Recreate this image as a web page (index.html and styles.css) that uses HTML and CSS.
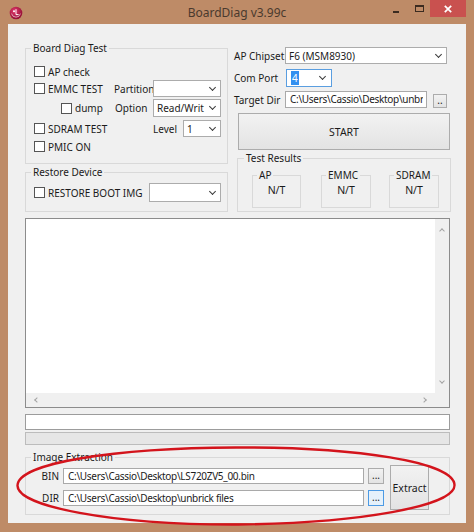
FILE: index.html
```html
<!DOCTYPE html>
<html lang="en">
<head>
<meta charset="utf-8">
<title>BoardDiag v3.99c</title>
<link rel="stylesheet" href="styles.css">
</head>
<body>
<div class="window">
  <div class="titlebar">
    <div class="tb-left">
      <svg class="app-icon" viewBox="0 0 14 14" width="14" height="14">
        <defs>
          <radialGradient id="lg" cx="40%" cy="35%" r="70%">
            <stop offset="0" stop-color="#e23a6e"/>
            <stop offset="1" stop-color="#8e0b30"/>
          </radialGradient>
        </defs>
        <circle cx="7" cy="7" r="6.3" fill="url(#lg)"/>
        <circle cx="5" cy="5.2" r="1" fill="#fff"/>
        <path d="M7 3.2 V8.6 H9.6" fill="none" stroke="#fff" stroke-width="1"/>
        <path d="M2.6 7.6 A4.5 4.5 0 0 0 11.4 7.6" fill="none" stroke="#fff" stroke-width="0.7" opacity="0.8"/>
      </svg>
    </div>
    <div class="tb-title">BoardDiag v3.99c</div>
    <div class="tb-controls">
      <span class="ctl ctl-min"><span class="min-glyph"></span></span>
      <span class="ctl ctl-max"><span class="max-glyph"></span></span>
      <span class="ctl ctl-close">
        <svg viewBox="0 0 8 8" width="8" height="8"><path d="M0.8 0.8 L7.2 7.2 M7.2 0.8 L0.8 7.2" stroke="#fff" stroke-width="1.7" fill="none"/></svg>
      </span>
    </div>
  </div>

  <div class="client">
    <div class="top">
      <div class="left-col">
        <fieldset class="group g-board">
          <legend>Board Diag Test</legend>
          <div class="group-body board-body">
            <div class="brow r1">
              <label class="chk"><span class="box"></span>AP check</label>
            </div>
            <div class="brow r2">
              <label class="chk"><span class="box"></span>EMMC TEST</label>
              <span class="lbl">Partition</span>
              <span class="combo"><span class="ctext"></span><span class="arrow"></span></span>
            </div>
            <div class="brow r3">
              <label class="chk chk-dump"><span class="box"></span>dump</label>
              <span class="lbl lbl-opt">Option</span>
              <span class="combo c-opt"><span class="ctext">Read/Writ</span><span class="arrow"></span></span>
            </div>
            <div class="brow r4">
              <label class="chk"><span class="box"></span>SDRAM TEST</label>
              <span class="level-cell">
                <span class="lbl">Level</span>
                <span class="combo c-level"><span class="ctext">1</span><span class="arrow"></span></span>
              </span>
            </div>
            <div class="brow r5">
              <label class="chk"><span class="box"></span>PMIC ON</label>
            </div>
          </div>
        </fieldset>

        <fieldset class="group g-restore">
          <legend>Restore Device</legend>
          <div class="group-body restore-row">
            <label class="chk"><span class="box"></span>RESTORE BOOT IMG</label>
            <span class="combo c-restore"><span class="ctext"></span><span class="arrow"></span></span>
          </div>
        </fieldset>
      </div>

      <div class="right-col">
        <div class="frow">
          <span class="flbl">AP Chipset</span>
          <span class="combo c-chip"><span class="ctext">F6 (MSM8930)</span><span class="arrow"></span></span>
        </div>
        <div class="frow r-com">
          <span class="flbl">Com Port</span>
          <span class="combo c-com"><span class="ctext"><span class="sel">4</span></span><span class="arrow"></span></span>
        </div>
        <div class="frow r-dir">
          <span class="flbl">Target Dir</span>
          <span class="tbox t-dir"><span class="tclip">C:\Users\Cassio\Desktop\unbri</span></span>
          <span class="btn btn-dd">..</span>
        </div>
        <div class="btn btn-start">START</div>
        <fieldset class="group g-results">
          <legend>Test Results</legend>
          <div class="results-row">
            <fieldset class="group sub s-ap"><legend>AP</legend><div class="nt">N/T</div></fieldset>
            <fieldset class="group sub s-emmc"><legend>EMMC</legend><div class="nt">N/T</div></fieldset>
            <fieldset class="group sub s-sdram"><legend>SDRAM</legend><div class="nt">N/T</div></fieldset>
          </div>
        </fieldset>
      </div>
    </div>

    <div class="log">
      <div class="log-body"></div>
      <div class="vscroll"><span class="chev chev-up"></span><span class="chev chev-down"></span></div>
      <div class="hscroll"><span class="chev chev-left"></span><span class="chev chev-right"></span></div>
      <div class="corner"></div>
    </div>

    <div class="status-box"></div>
    <div class="progress"></div>

    <fieldset class="group g-extract">
      <legend>Image Extraction</legend>
      <div class="ex-body">
        <div class="ex-grid">
          <span class="ex-lbl">BIN</span>
          <span class="tbox">C:\Users\Cassio\Desktop\LS720ZV5_00.bin</span>
          <span class="btn btn-dots">...</span>
          <span class="ex-lbl">DIR</span>
          <span class="tbox">C:\Users\Cassio\Desktop\unbrick files</span>
          <span class="btn btn-dots btn-focus">...</span>
        </div>
        <span class="btn btn-extract">Extract</span>
      </div>
    </fieldset>
  </div>
</div>

<svg class="annotation" viewBox="0 0 474 532" width="474" height="532">
  <path d="M236 447.5 C356 447 454 462 454.5 485 C455 506 360 523 238 524.5 C110 525 17 506 17.5 485.5 C18 463 114 448 236 447.5 Z" fill="none" stroke="#d3141c" stroke-width="2.4"/>
</svg>
</body>
</html>
```

FILE: styles.css
```css
* { box-sizing: border-box; }

html, body { margin: 0; padding: 0; }

body {
  width: 474px;
  height: 532px;
  overflow: hidden;
  position: relative;
  background: #be8b67;
  font-family: "Noto Sans", "Open Sans", sans-serif;
}

.window {
  width: 474px;
  height: 532px;
  display: flex;
  flex-direction: column;
}

/* ---------- title bar ---------- */
.titlebar {
  height: 24px;
  flex: none;
  display: grid;
  grid-template-columns: 1fr auto 1fr;
}
.tb-left { padding: 6px 0 0 9px; }
.app-icon { display: block; }
.tb-title {
  font-size: 12px;
  line-height: 25px;
  color: #4a3a2e;
}
.tb-controls {
  display: flex;
  justify-content: flex-end;
  align-items: flex-start;
  padding-right: 8px;
}
.ctl { height: 17px; display: flex; }
.ctl-min { width: 24px; padding: 11px 0 0 12px; }
.min-glyph { width: 6px; height: 2px; background: #3b2b20; }
.ctl-max { width: 25px; padding: 5px 0 0 10px; }
.max-glyph {
  width: 9px;
  height: 7px;
  border: 1px solid #3b2b20;
  border-top-width: 2px;
}
.ctl-close {
  width: 36px;
  background: #c9514f;
  align-items: center;
  justify-content: center;
}

/* ---------- client ---------- */
.client {
  margin: 0 8px;
  height: 499px;
  flex: none;
  background: #f0f0f0;
  padding: 17px 15px 0 17px;
  font-size: 10px;
  line-height: 14px;
  color: #1b1b1b;
}

.top { display: flex; gap: 6px; }
.left-col { width: 203px; flex: none; }
.right-col { width: 217px; flex: none; padding-top: 6px; }

/* group boxes */
.group {
  margin: 0;
  padding: 0;
  min-width: 0;
  border: 1px solid #d9d9d9;
}
.group > legend {
  margin-left: 5px;
  padding: 0 2px;
  font-size: 10px;
  line-height: 14px;
  text-align: left;
}

/* checkboxes */
.chk {
  display: flex;
  align-items: center;
  gap: 3px;
  white-space: nowrap;
}
.box {
  width: 11px;
  height: 11px;
  flex: none;
  border: 1px solid #555;
  background: #fff;
}

/* combos */
.combo {
  display: flex;
  align-items: center;
  height: 17px;
  background: #fff;
  border: 1px solid #acacac;
  padding: 0 5px 0 3px;
}
.ctext {
  flex: 1;
  min-width: 0;
  white-space: nowrap;
  overflow: hidden;
}
.arrow {
  width: 5px;
  height: 5px;
  flex: none;
  border-right: 1.3px solid #3a3a3a;
  border-bottom: 1.3px solid #3a3a3a;
  transform: rotate(45deg);
  margin-top: -3px;
}

/* text boxes & buttons */
.tbox {
  display: block;
  background: #fff;
  border: 1px solid #a9a9a9;
  padding: 0 3px 0 4px;
  line-height: 15px;
  font-size: 10px;
  letter-spacing: -0.3px;
  white-space: nowrap;
  overflow: hidden;
}
.btn {
  display: flex;
  align-items: center;
  justify-content: center;
  border: 1px solid #acacac;
  background: linear-gradient(#f2f2f2, #e3e3e3);
  color: #1b1b1b;
}

/* ---------- board diag test ---------- */
.board-body { padding: 8px 0 8px 8px; }
.brow {
  display: grid;
  grid-template-columns: 80px 39px 68px;
  align-items: center;
  height: 17px;
}
.r3 { margin-top: 2px; height: 18px; }
.r3 .combo { height: 18px; }
.r4 { margin-top: 3px; }
.r5 { margin-top: 1px; }
.chk-dump { padding-left: 27px; }
.lbl-opt { padding-left: 1px; }
.level-cell {
  grid-column: 3;
  display: flex;
  align-items: center;
  justify-content: space-between;
}
.c-level { width: 38px; }

.g-restore { margin-top: 1px; }
.restore-row {
  display: flex;
  align-items: center;
  justify-content: space-between;
  height: 32px;
  padding: 4px 6px 9px 8px;
}
.c-restore { width: 72px; height: 19px; }

/* ---------- right column ---------- */
.frow { display: flex; align-items: center; height: 17px; }
.flbl { width: 51px; flex: none; white-space: nowrap; }
.c-chip { width: 162px; }
.r-com { margin-top: 5px; height: 18px; }
.c-com {
  width: 46px;
  height: 18px;
  margin-left: 1px;
  border-color: #5a9ee0;
  padding-right: 6px;
}
.sel {
  background: #3390f0;
  color: #fff;
  padding: 0 1px;
  margin-left: 1px;
}
.r-dir { margin-top: 4px; }
.t-dir { width: 142px; height: 17px; flex: none; }
.tclip { display: block; overflow: hidden; white-space: nowrap; }
.btn-dd {
  width: 14px;
  height: 14px;
  flex: none;
  margin-left: 6px;
  margin-top: 3px;
  align-items: flex-end;
  line-height: 10px;
  padding-bottom: 2px;
}
.btn-start {
  margin: 5px 0 0 4px;
  width: 212px;
  height: 37px;
  font-size: 10.5px;
}
.g-results { margin: 1px 0 0 3px; width: 214px; }
.g-results > legend { margin-left: 6px; }
.results-row { display: flex; padding: 3px 0 3px 0; }
.sub { padding: 1px 0 10px; }
.sub > legend { margin-left: 4px; }
.s-ap { width: 49px; margin-left: 14px; }
.s-emmc { width: 50px; margin-left: 20px; }
.s-sdram { width: 50px; margin-left: 18px; }
.nt { line-height: 14px; font-size: 10.5px; text-align: center; }

/* ---------- log ---------- */
.log {
  margin-top: 6px;
  width: 425px;
  height: 190px;
  border: 1px solid #8c8c8c;
  display: grid;
  grid-template-columns: 1fr 14px;
  grid-template-rows: 1fr 14px;
}
.log-body { background: #fff; }
.vscroll {
  background: #f0f0f0;
  display: flex;
  flex-direction: column;
  align-items: center;
  justify-content: space-between;
  padding: 7px 0 7px;
}
.hscroll {
  background: #f0f0f0;
  display: flex;
  align-items: center;
  justify-content: space-between;
  padding: 0 6px 0 6px;
}
.corner { background: #f0f0f0; }
.chev {
  width: 4px;
  height: 4px;
  border-right: 1.2px solid #a3a3a3;
  border-bottom: 1.2px solid #a3a3a3;
}
.chev-up { transform: rotate(-135deg); margin-top: 3px; }
.chev-down { transform: rotate(45deg); margin-bottom: 3px; }
.chev-left { transform: rotate(135deg); margin-left: 3px; }
.chev-right { transform: rotate(-45deg); margin-right: 3px; }

.status-box {
  margin-top: 6px;
  width: 425px;
  height: 16px;
  background: #fff;
  border: 1px solid #9c9c9c;
}
.progress {
  margin-top: 2px;
  width: 425px;
  height: 13px;
  background: #e6e6e6;
  border: 1px solid #bcbcbc;
}

/* ---------- image extraction ---------- */
.g-extract { margin-top: 5px; width: 425px; }
.ex-body { display: flex; padding: 4px 0 4px 0; }
.ex-grid {
  display: grid;
  grid-template-columns: 33px 301px 16px;
  grid-auto-rows: 16px;
  column-gap: 4px;
  row-gap: 6px;
  align-items: center;
}
.ex-lbl { text-align: right; }
.ex-grid .tbox { height: 16px; line-height: 14px; }
.btn-dots {
  height: 16px;
  align-items: flex-end;
  line-height: 10px;
  padding-bottom: 3px;
}
.btn-focus { border-color: #4c9ae4; background: #e5f1fb; }
.btn-extract {
  width: 39px;
  height: 45px;
  margin: -3px 0 0 6px;
  font-size: 10.5px;
}

/* ---------- annotation overlay ---------- */
.annotation {
  position: absolute;
  left: 0;
  top: 0;
  pointer-events: none;
}
```
